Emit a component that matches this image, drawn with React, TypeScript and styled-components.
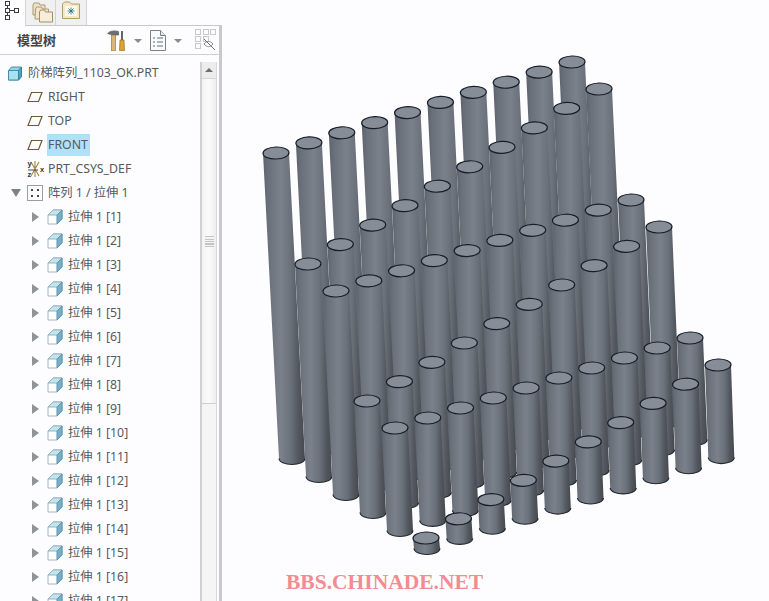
import React, { FC } from 'react';
import styled, { createGlobalStyle } from 'styled-components';

const GlobalStyle = createGlobalStyle`
  html, body, #root {
    margin: 0;
    padding: 0;
    height: 100%;
    background: #fdfdff;
  }
`;

const Page = styled.div`
  width: 769px;
  height: 601px;
  display: flex;
  overflow: hidden;
  font-family: "Noto Sans", "Noto Sans CJK SC", sans-serif;
`;

const Panel = styled.aside`
  width: 222px;
  flex: none;
  display: flex;
  flex-direction: column;
`;

const Tabs = styled.div`
  height: 25px;
  flex: none;
  display: flex;
  padding-right: 2px;
`;

const Tab = styled.div<{ $active?: boolean; $w: number; $pad?: number }>`
  width: ${p => p.$w}px;
  display: flex;
  align-items: flex-start;
  justify-content: flex-start;
  box-sizing: border-box;
  padding: 1px 0 0 ${p => p.$pad ?? 0}px;
  margin-bottom: ${p => (p.$active ? '-1px' : '0')};
  position: relative;
  background: ${p => (p.$active ? '#fdfdff' : '#f0f0f0')};
  border-left: ${p => (p.$active ? 'none' : '1px solid #d4d4d4')};
`;

const TabRest = styled.div`
  flex: 1;
  border-left: 1px solid #d4d4d4;
`;

const Content = styled.div`
  flex: 1;
  min-height: 0;
  display: flex;
  flex-direction: column;
  border-right: 3px solid #c6c9cd;
`;

const Header = styled.div`
  height: 28px;
  flex: none;
  display: flex;
  align-items: center;
  padding-left: 17px;
  border-top: 1px solid #c8c8c8;
  border-bottom: 1px solid #d0d0d0;
`;

const Title = styled.h2`
  margin: 0;
  font-size: 13px;
  line-height: 28px;
  font-weight: 700;
  color: #444;
`;

const HeaderTools = styled.div`
  margin-left: 51px;
  display: flex;
  align-items: center;
`;

const Caret = styled.span<{ $gap: number }>`
  width: 0;
  height: 0;
  margin: 1px ${p => p.$gap}px 0 8px;
  border-left: 4px solid transparent;
  border-right: 4px solid transparent;
  border-top: 4px solid #8a8a8a;
`;

const Body = styled.div`
  flex: 1;
  min-height: 0;
  display: flex;
`;

const Tree = styled.ul`
  width: 200px;
  flex: none;
  margin: 0;
  padding: 6px 0 0;
  list-style: none;
  overflow: hidden;
`;

const Row = styled.li<{ $indent: number }>`
  height: 24px;
  display: flex;
  align-items: center;
  padding-left: ${p => p.$indent}px;
  font-size: 12.3px;
  color: #555a5e;
  white-space: nowrap;
`;

const ArrowSlot = styled.span`
  width: 20px;
  flex: none;
  display: flex;
  align-items: center;
  justify-content: center;
  padding-right: 3px;
  box-sizing: border-box;
`;

const Collapsed = styled.span`
  width: 0;
  height: 0;
  border-top: 5px solid transparent;
  border-bottom: 5px solid transparent;
  border-left: 7px solid #8f9397;
`;

const Expanded = styled.span`
  width: 0;
  height: 0;
  border-left: 5px solid transparent;
  border-right: 5px solid transparent;
  border-top: 8px solid #7e8286;
`;

const IconBox = styled.span`
  width: 16px;
  height: 16px;
  flex: none;
  display: flex;
  align-items: center;
  margin-right: 4px;

  svg {
    flex: none;
  }
`;

const Label = styled.span<{ $selected?: boolean }>`
  height: 22px;
  line-height: 22px;
  padding: 0 2px 0 1px;
  background: ${p => (p.$selected ? '#b1e1f8' : 'transparent')};
`;

const Scrollbar = styled.div`
  width: 17px;
  flex: none;
  margin: 7px 2px 0 0;
  display: flex;
  flex-direction: column;
  background: #f5f5f5;
  border-left: 2px solid #cfd0d2;
  border-right: 1px solid #d8d8d8;
  box-sizing: border-box;
`;

const ScrollUp = styled.div`
  height: 17px;
  flex: none;
  display: flex;
  align-items: center;
  justify-content: center;
  background: #ececec;
  border-bottom: 1px solid #d6d6d6;
  box-sizing: border-box;

  &::before {
    content: '';
    border-left: 4px solid transparent;
    border-right: 4px solid transparent;
    border-bottom: 4px solid #6e6e6e;
  }
`;

const ScrollThumb = styled.div`
  height: 325px;
  flex: none;
  display: flex;
  align-items: center;
  justify-content: center;
  background: linear-gradient(90deg, #f2f2f2, #fbfbfb 50%, #ededed);
  border-bottom: 1px solid #cfcfcf;
  box-sizing: border-box;
`;

const Grip = styled.div`
  width: 9px;
  height: 11px;
  background: repeating-linear-gradient(180deg, #c4c4c4 0 1px, #f4f4f4 1px 2.5px);
`;

const Canvas = styled.main`
  flex: 1;
  position: relative;
  min-width: 0;
`;

const Stage = styled.svg`
  display: block;
`;

const Watermark = styled.div`
  position: absolute;
  left: 64px;
  top: 570px;
  font-family: "Liberation Serif", serif;
  font-size: 21.5px;
  line-height: 24px;
  font-weight: 700;
  color: #f58b90;
  white-space: nowrap;
`;

const ModelTreeIcon = () => (
  <svg width="14" height="20" viewBox="0 0 14 20" fill="none" stroke="#3c3c3c" strokeWidth="1">
    <rect x="0.5" y="0.5" width="4" height="4" />
    <rect x="0.5" y="7.5" width="4" height="4" />
    <rect x="0.5" y="14.5" width="4" height="4" />
    <rect x="9.5" y="7.5" width="4" height="4" />
    <path d="M4.5 9.5h5M2.5 4.5v3M2.5 11.5v3" />
  </svg>
);

const FoldersIcon = () => (
  <svg width="21" height="22" viewBox="0 0 21 22">
    <path d="M1 4l1-2h5l1 2h5v10H1z" fill="#efe3c4" stroke="#a89a76" />
    <path d="M3.5 8l1-2h5l1 2h6v10h-13.5z" fill="#f1e6ca" stroke="#a89a76" />
    <path d="M7.5 11l1-2h4l1 2h7v10h-13z" fill="#f6eed8" stroke="#a0906a" />
  </svg>
);

const SettingsFolderIcon = () => (
  <svg width="18" height="18" viewBox="0 0 18 18">
    <path d="M0.5 3l2-2h5l2 2h8v14.5H0.5z" fill="#f4e7c4" stroke="#b09c6c" />
    <rect x="3" y="5" width="12" height="10" fill="#fbf8ee" />
    <path d="M9 6.5v7M5.5 10h7M6.5 7.5l5 5M11.5 7.5l-5 5" stroke="#1b6f7d" strokeWidth="0.8" />
  </svg>
);

const ToolsIcon = () => (
  <svg width="19" height="21" viewBox="0 0 19 21">
    <path d="M0.5 3.5C3 0.5 8 0.5 11.5 1.5v3.5H6C4 4.5 2 4 0.5 3.5z" fill="#6c6f72" stroke="#45484a" strokeWidth="0.6" />
    <rect x="4.5" y="5" width="4" height="16" fill="#d8b676" stroke="#9b7b3e" strokeWidth="0.7" />
    <rect x="14" y="1" width="2" height="9" fill="#62666a" />
    <path d="M13 10h4l0.5 10.5h-5z" fill="#dca52d" stroke="#96702a" strokeWidth="0.7" />
  </svg>
);

const ListDocIcon = () => (
  <svg width="16" height="21" viewBox="0 0 16 21" fill="#fafafa" stroke="#7d8185">
    <path d="M0.5 0.5h10l5 5v15H0.5z" />
    <path d="M10.5 0.5v5h5" fill="#e4e4e4" />
    <path d="M3 8h2M7 8h6M3 12h2M7 12h6M3 16h2M7 16h6" stroke="#5a6f7c" />
  </svg>
);

const HiddenTreeIcon = () => (
  <svg width="21" height="22" viewBox="0 0 21 22" fill="none" stroke="#c9c9c9">
    <rect x="0.5" y="0.5" width="5" height="5" />
    <rect x="0.5" y="7.5" width="5" height="5" />
    <rect x="0.5" y="14.5" width="5" height="5" />
    <rect x="8.5" y="0.5" width="5" height="5" />
    <rect x="15.5" y="0.5" width="5" height="5" />
    <rect x="8.5" y="7.5" width="5" height="5" />
    <path d="M9 15c3-3.5 6-3.5 9 0-3 3.5-6 3.5-9 0z" stroke="#8d8d8d" />
    <path d="M9 10l11 11" stroke="#6d6d6d" />
  </svg>
);

const SolidIcon = () => (
  <svg width="16" height="16" viewBox="0 0 16 16">
    <path d="M1.5 5.5l3-3.5H14.5V11.5l-3 3.5H1.5z" fill="#8fd4ea" stroke="#4d8ba3" strokeLinejoin="round" />
    <path d="M1.5 5.5h10V15H1.5z" fill="#a8e1f2" stroke="#4d8ba3" strokeLinejoin="round" />
    <path d="M11.5 5.5l3-3.5V11.5l-3 3.5z" fill="#48a6c8" stroke="#3f7f97" strokeLinejoin="round" />
  </svg>
);

const PlaneIcon = () => (
  <svg width="16" height="16" viewBox="0 0 16 16" fill="none" stroke="#6b5a3c" strokeWidth="1.2">
    <path d="M4.5 3.5H15L11.5 12.5H1z" />
  </svg>
);

const CsysIcon = () => (
  <svg width="17" height="20" viewBox="0 0 17 20">
    <path d="M4 3l8 14M12 3L4 17M8 2v16" stroke="#a5834a" strokeWidth="1.1" fill="none" />
    <path d="M1 11h10" stroke="#4c4a44" strokeWidth="1" fill="none" />
    <text x="0.5" y="7" fontSize="7.5" fontWeight="700" fill="#333" fontFamily="Liberation Sans">y</text>
    <text x="0.5" y="18" fontSize="7.5" fontWeight="700" fill="#333" fontFamily="Liberation Sans">z</text>
    <text x="13" y="12.5" fontSize="7.5" fontWeight="700" fill="#333" fontFamily="Liberation Sans">x</text>
  </svg>
);

const PatternIcon = () => (
  <svg width="16" height="16" viewBox="0 0 16 16">
    <rect x="0.5" y="0.5" width="15" height="15" fill="#fbfbfb" stroke="#9a9ea2" />
    <path d="M4 4h2v2H4zM10 4h2v2h-2zM4 10h2v2H4zM10 10h2v2h-2z" fill="#3f4a52" />
  </svg>
);

const FeatureIcon = () => (
  <svg width="16" height="16" viewBox="0 0 16 16">
    <path d="M1 6l5-5h9v9l-5 5H1z" fill="#fbfdfe" stroke="#aab4ba" strokeLinejoin="round" />
    <path d="M1 6l5-5h9l-5 5z" fill="#c5e4ee" stroke="#8fb3c0" strokeLinejoin="round" />
    <path d="M10 6l5-5v9l-5 5z" fill="#76b0c9" stroke="#5f96ad" strokeLinejoin="round" />
  </svg>
);

// top centres of the first and last cylinder in each row of the pattern
const topRows = [
  [276, 153, 572, 62],
  [308, 264, 599, 89],
  [336, 291, 631, 200],
  [367, 401, 659, 227],
  [395, 428, 690, 338],
  [426, 538, 718, 365],
];

const RX = 13;
const RY = 6;

const cylinders = topRows
  .flatMap(([x0, y0, x1, y1], r) =>
    Array.from({ length: 10 }, (_, c) => ({
      id: `${r}-${c}`,
      tx: x0 + ((x1 - x0) * c) / 9,
      ty: y0 + ((y1 - y0) * c) / 9,
      bx: 292 + 27 * r + 32.7 * c,
      by: 458.5 + 18 * r - 10.1 * c,
    })),
  )
  .sort((a, b) => a.by - b.by);

const Cylinders = () => (
  <Stage width="547" height="601" viewBox="222 0 547 601">
    <defs>
      <linearGradient id="body" x1="0" x2="1" y1="0" y2="0">
        <stop offset="0" stopColor="#5d636c" />
        <stop offset="0.12" stopColor="#6a707a" />
        <stop offset="0.42" stopColor="#7a818b" />
        <stop offset="0.66" stopColor="#6b717b" />
        <stop offset="0.84" stopColor="#53585f" />
        <stop offset="1" stopColor="#44484e" />
      </linearGradient>
    </defs>
    {cylinders.map(({ id, tx, ty, bx, by }) => (
      <g key={id}>
        <path
          d={`M${tx - RX} ${ty}L${bx - RX} ${by}A${RX} ${RY} 0 0 0 ${bx + RX} ${by}L${tx + RX} ${ty}Z`}
          fill="url(#body)"
        />
        <path
          d={`M${bx - RX} ${by}A${RX} ${RY} 0 0 0 ${bx + RX} ${by}`}
          fill="none"
          stroke="#22272f"
          strokeWidth="1.1"
        />
        <ellipse
          cx={tx}
          cy={ty}
          rx={RX}
          ry={RY}
          fill="#868d97"
          stroke="#161e2a"
          strokeWidth="1.2"
          transform={`rotate(-2 ${tx} ${ty})`}
        />
      </g>
    ))}
  </Stage>
);

const features = Array.from({ length: 17 }, (_, i) => `拉伸 1 [${i + 1}]`);

const App: FC = () => (
  <Page>
    <GlobalStyle />
    <Panel>
      <Tabs>
        <Tab $active $w={25} $pad={5}>
          <ModelTreeIcon />
        </Tab>
        <Tab $w={30} $pad={6}>
          <FoldersIcon />
        </Tab>
        <Tab $w={31} $pad={6}>
          <SettingsFolderIcon />
        </Tab>
        <TabRest />
      </Tabs>
      <Content>
        <Header>
          <Title>模型树</Title>
          <HeaderTools>
            <ToolsIcon />
            <Caret $gap={8} />
            <ListDocIcon />
            <Caret $gap={13} />
            <HiddenTreeIcon />
          </HeaderTools>
        </Header>
        <Body>
          <Tree>
            <Row $indent={7}>
              <IconBox>
                <SolidIcon />
              </IconBox>
              <Label>阶梯阵列_1103_OK.PRT</Label>
            </Row>
            {['RIGHT', 'TOP', 'FRONT'].map(name => (
              <Row key={name} $indent={7}>
                <ArrowSlot />
                <IconBox>
                  <PlaneIcon />
                </IconBox>
                <Label $selected={name === 'FRONT'}>{name}</Label>
              </Row>
            ))}
            <Row $indent={7}>
              <ArrowSlot />
              <IconBox>
                <CsysIcon />
              </IconBox>
              <Label>PRT_CSYS_DEF</Label>
            </Row>
            <Row $indent={7}>
              <ArrowSlot>
                <Expanded />
              </ArrowSlot>
              <IconBox>
                <PatternIcon />
              </IconBox>
              <Label>阵列 1 / 拉伸 1</Label>
            </Row>
            {features.map(name => (
              <Row key={name} $indent={27}>
                <ArrowSlot>
                  <Collapsed />
                </ArrowSlot>
                <IconBox>
                  <FeatureIcon />
                </IconBox>
                <Label>{name}</Label>
              </Row>
            ))}
          </Tree>
          <Scrollbar>
            <ScrollUp />
            <ScrollThumb>
              <Grip />
            </ScrollThumb>
          </Scrollbar>
        </Body>
      </Content>
    </Panel>
    <Canvas>
      <Cylinders />
      <Watermark>BBS.CHINADE.NET</Watermark>
    </Canvas>
  </Page>
);

export default App;
